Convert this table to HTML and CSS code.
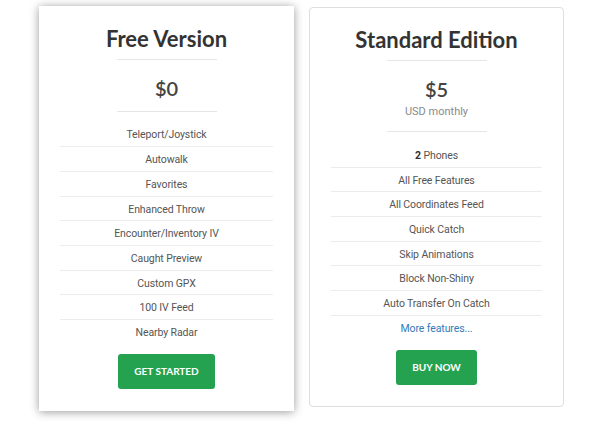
FILE: index.html
```html
<!DOCTYPE html>
<html>
<head>
<meta charset="utf-8">
<link rel="stylesheet" href="styles.css">
</head>
<body>
<div class="pricing">
  <div class="card card-raised">
    <h2 class="title">Free Version</h2>
    <hr class="rule rule-top">
    <div class="price">$0</div>
    <hr class="rule rule-bottom">
    <ul class="features">
      <li>Teleport/Joystick</li>
      <li>Autowalk</li>
      <li>Favorites</li>
      <li>Enhanced Throw</li>
      <li>Encounter/Inventory IV</li>
      <li>Caught Preview</li>
      <li>Custom GPX</li>
      <li>100 IV Feed</li>
      <li>Nearby Radar</li>
    </ul>
    <a class="btn" href="#">GET STARTED</a>
  </div>
  <div class="card card-bordered">
    <h2 class="title">Standard Edition</h2>
    <hr class="rule rule-top">
    <div class="price">$5</div>
    <div class="period">USD monthly</div>
    <hr class="rule rule-bottom rule-period">
    <ul class="features">
      <li><b>2</b> Phones</li>
      <li>All Free Features</li>
      <li>All Coordinates Feed</li>
      <li>Quick Catch</li>
      <li>Skip Animations</li>
      <li>Block Non-Shiny</li>
      <li>Auto Transfer On Catch</li>
      <li class="more"><a href="#">More features...</a></li>
    </ul>
    <a class="btn" href="#">BUY NOW</a>
  </div>
</div>
</body>
</html>
```
FILE: styles.css
```css
html, body {
  margin: 0;
  padding: 0;
  background: #fff;
}
body {
  font-family: Roboto, "Open Sans", sans-serif;
  color: #555;
  min-height: 427px;
}
.pricing {
  display: flex;
  align-items: flex-start;
  gap: 15px;
  padding: 6px 0 14px 39px;
}
.card {
  width: 255px;
  box-sizing: border-box;
  background: #fff;
  padding: 20px 21px 22px;
  display: flex;
  flex-direction: column;
  align-items: center;
}
.card-raised {
  box-shadow: 0 1px 9px rgba(0, 0, 0, 0.4);
}
.card-bordered {
  margin-top: 1px;
  border: 1px solid #dedede;
  border-radius: 4px;
  padding-top: 19px;
  padding-bottom: 21px;
}
.title {
  font-family: Lato, sans-serif;
  font-weight: 700;
  font-size: 22px;
  line-height: 26.4px;
  color: #333;
  margin: 0;
}
.rule {
  width: 100px;
  border: 0;
  border-top: 1px solid #e6e6e6;
  margin: 0;
}
.rule-top {
  margin-top: 6.5px;
}
.price {
  font-family: Lato, sans-serif;
  font-size: 20px;
  line-height: 24px;
  color: #444;
  font-weight: 600;
  margin-top: 16.5px;
}
.period {
  font-size: 11px;
  line-height: 14px;
  color: #8a8a8a;
  margin-top: 4px;
}
.rule-bottom {
  margin-top: 10.5px;
}
.rule-period {
  margin-top: 12px;
}
.features {
  list-style: none;
  margin: 10.5px 0 0;
  padding: 0;
  width: 100%;
}
.features li {
  font-size: 10.5px;
  line-height: 14.7px;
  letter-spacing: -0.1px;
  padding: 6px 0 3px;
  text-align: center;
  border-bottom: 1px solid #ececec;
}
.features li:last-child {
  border-bottom: 0;
}
.features b {
  color: #333;
}
.more a {
  color: #337ab7;
  text-decoration: none;
}
.btn {
  margin-top: 10px;
  display: block;
  background: #24a250;
  color: #fff;
  font-family: Lato, sans-serif;
  font-weight: 700;
  font-size: 10px;
  line-height: 35px;
  padding: 0 16px;
  border-radius: 3px;
  text-decoration: none;
}
```
